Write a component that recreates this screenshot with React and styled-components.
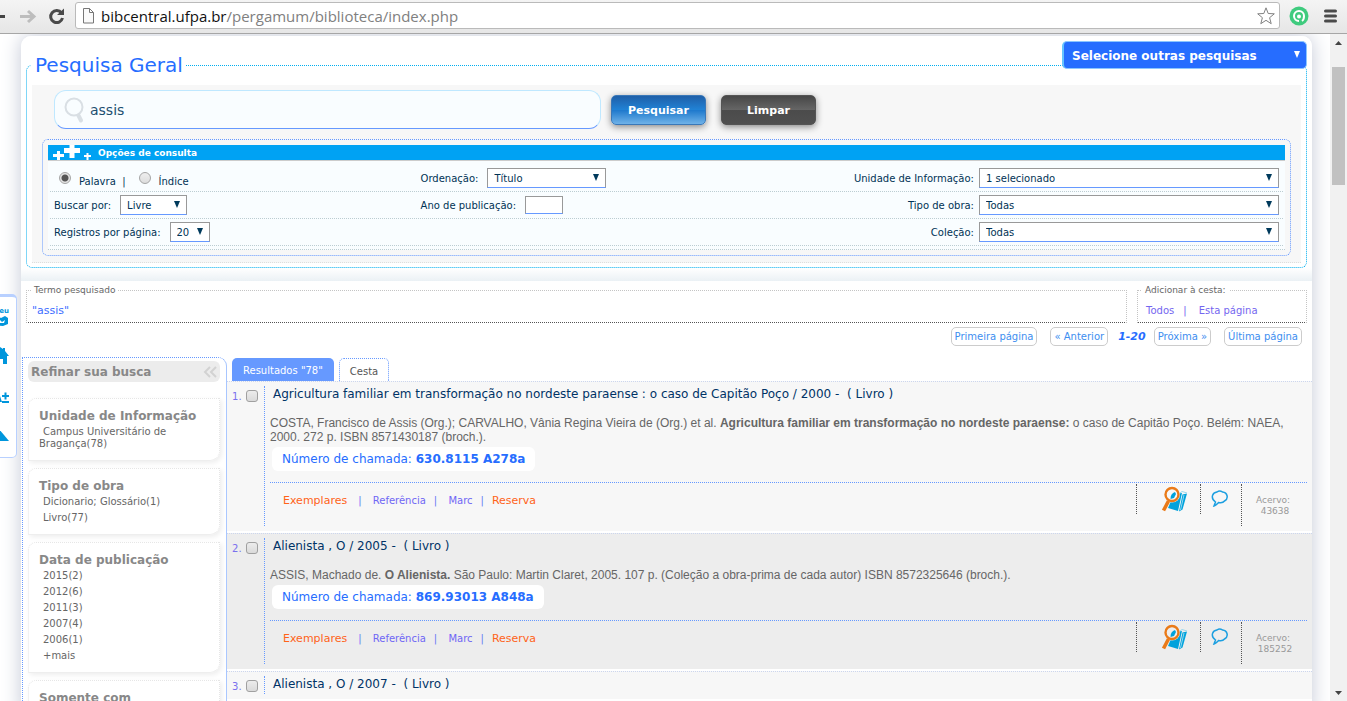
import React from 'react';
import styled, { createGlobalStyle, css } from 'styled-components';

const verdana = `Verdana, "DejaVu Sans", sans-serif`;
const arial = `Arial, "Liberation Sans", sans-serif`;

const Global = createGlobalStyle`
  *, *::before, *::after { box-sizing: border-box; }
  body { margin: 0; overflow: hidden; background: #fff; font-family: ${verdana}; font-size: 10px; color: #666; }
  a { text-decoration: none; color: inherit; }
  input, select, button { font-family: inherit; margin: 0; }
`;

const Window = styled.div`
  display: flex;
  flex-direction: column;
  height: 100vh;
  overflow: hidden;
`;

const Chrome = styled.header`
  flex: none;
  display: flex;
  align-items: center;
  height: 34px;
  padding: 0 9px 2px 0;
  background: linear-gradient(#f4f4f4, #e6e6e6);
  border-bottom: 1px solid #a6a6a6;
`;

const NavIcons = styled.div`
  flex: none;
  display: flex;
  width: 75px;
`;

const AddressBar = styled.div`
  flex: 1;
  display: flex;
  align-items: center;
  height: 27px;
  padding: 0 4px 0 6px;
  background: #fff;
  border: 1px solid #bababa;
  border-radius: 3px;
`;

const Address = styled.span`
  flex: 1;
  margin-left: 6px;
  font: 15px/24px "Segoe UI", "Open Sans", sans-serif;
  color: #808080;
  b { font-weight: 400; color: #111; }
`;

const ChromeRight = styled.div`
  flex: none;
  display: flex;
  align-items: center;
  gap: 14px;
  padding-left: 9px;
`;

const Viewport = styled.div`
  position: relative;
  flex: 1;
  display: flex;
  min-height: 0;
  overflow: hidden;
`;

const Page = styled.main`
  flex: 1;
  min-width: 0;
  overflow: hidden;
  padding: 2px 18px 0 21px;
`;

const Sheet = styled.div`
  position: relative;
  min-height: 100%;
  background: #fff;
  border-radius: 10px 10px 0 0;
  box-shadow: 0 0 20px #c3c8d6;
`;

const ScrollTrack = styled.div`
  flex: none;
  display: flex;
  flex-direction: column;
  width: 17px;
  padding: 7px 2px 6px;
  background: #f1f1f1;
`;

const ScrollThumb = styled.div`
  height: 118px;
  margin: 22px 0 auto;
  background: #c1c1c1;
`;

const Arrow = styled.svg`
  display: block;
  align-self: center;
`;

const SelectBox = styled.span`
  position: relative;
  display: inline-block;
  width: ${p => p.$w}px;
  max-width: 100%;
  &::after {
    content: "";
    position: absolute;
    right: 7px;
    top: 6px;
    border: solid transparent;
    border-width: 7px 3px 0;
    border-top-color: #003a5c;
    pointer-events: none;
  }
`;

const PlainSelect = styled.select`
  appearance: none;
  display: block;
  width: 100%;
  height: 20px;
  padding: 0 6px;
  font-size: 10px;
  color: #003355;
  background: #fff;
  border: 1px solid #999;
  border-bottom-color: #6699ff;
  border-radius: 0;
`;

const OtherSearches = styled(SelectBox)`
  position: absolute;
  top: 5px;
  right: 5px;
  &::after { right: 7px; top: 10px; border-top-color: #fff; }
`;

const OtherSelect = styled.select`
  appearance: none;
  display: block;
  width: 100%;
  height: 28px;
  padding: 2px 8px 0;
  font-size: 12px;
  font-weight: 700;
  color: #fff;
  background: #266dff;
  border: 1px solid #8cc6ff;
  border-left: 2px solid #66c4ff;
  border-radius: 5px;
`;

const SearchSection = styled.section`
  padding: 16px 5px 13px;
  background: linear-gradient(#fff, #fff) top / 100% calc(100% - 13px) no-repeat,
    linear-gradient(#fff, #ebf1f5) bottom / 100% 13px no-repeat;
  border-radius: 10px 10px 0 0;
`;

const SearchSet = styled.fieldset`
  min-width: 0;
  margin: 0;
  padding: 7px 5px 4px;
  border: 1px dotted #00aeef;
  border-radius: 6px;
`;

const SearchLegend = styled.legend`
  margin-left: -1px;
  padding: 0 2px 0 4px;
  font-size: 20px;
  line-height: 26px;
  color: #266dff;
`;

const GreyPanel = styled.div`
  padding: 5px 10px 6px;
  background: #f7f7f7;
  border-bottom: 1px dotted #ddd;
`;

const SearchRow = styled.div`
  display: flex;
  align-items: center;
  margin: 0 12px 10px;
`;

const SearchField = styled.label`
  display: flex;
  align-items: center;
  width: 547px;
  height: 39px;
  margin-right: 10px;
  padding-left: 8px;
  background: #f9fdff;
  border: 1px solid #bfe8ff;
  border-bottom-color: #6699ff;
  border-radius: 12px;
  svg { flex: none; }
`;

const SearchInput = styled.input`
  flex: 1;
  min-width: 0;
  margin-left: 5px;
  padding: 0;
  font-size: 14px;
  color: #1d4f70;
  background: transparent;
  border: 0;
  outline: 0;
`;

const Button = styled.button`
  width: 95px;
  height: 30px;
  margin-right: 15px;
  padding: 2px 0 0;
  font-size: 11px;
  font-weight: 700;
  color: #fff;
  border: 1px solid ${p => (p.$primary ? '#3a78b8' : '#555')};
  border-radius: 5px;
  box-shadow: 0 2px 7px #888;
  background: ${p => (p.$primary
    ? 'linear-gradient(#1f5fa8, #2183d6 50%, #1d78cc 50%, #6fb2e8)'
    : 'linear-gradient(#474747, #666 50%, #4b4b4b 50%, #505050)')};
`;

const Options = styled.div`
  padding: 5px;
  border: 1px dotted #6699ff;
  border-radius: 6px;
`;

const OptionsHead = styled.h2`
  display: flex;
  align-items: center;
  gap: 7px;
  height: 16px;
  margin: 0;
  padding-left: 5px;
  font-size: 9px;
  font-weight: 700;
  color: #fff;
  background: #00a2f3;
  border-bottom: 1px solid #ccc;
`;

const OptionsBody = styled.div`
  padding: 4px 2px 3px;
  background: #f9fdff;
  border-bottom: 1px dotted #bccdd2;
`;

const OptionRow = styled.div`
  display: grid;
  grid-template-columns: 11fr 8fr 18fr;
  height: 27px;
  border-bottom: 1px dotted #bccdd2;
`;

const Cell = styled.div`
  display: flex;
  align-items: center;
  gap: ${p => p.$gap || 9}px;
  justify-content: ${p => (p.$end ? 'flex-end' : 'flex-start')};
  padding: 0 4px;
  color: #003355;
`;

const YearInput = styled.input`
  width: 38px;
  height: 18px;
  padding: 0 4px;
  font-size: 10px;
  background: #fff;
  border: 1px solid #999;
  border-bottom-color: #6699ff;
`;

const Radio = styled.input`
  appearance: none;
  width: 12px;
  height: 12px;
  margin-left: 5px;
  border: 1px solid #a5a5a5;
  border-radius: 50%;
  background: linear-gradient(#eee, #ddd);
  &:checked { background: radial-gradient(circle, #555 0 3px, #e4e4e4 4px); }
`;

const RadioLabel = styled.label`
  padding-top: 6px;
`;

const TermRow = styled.div`
  display: flex;
  gap: 10px;
  padding: 4px 5px 0;
`;

const InfoSet = styled.fieldset`
  flex: ${p => (p.$w ? `0 0 ${p.$w}px` : '1')};
  min-width: 0;
  height: 38px;
  margin: 0;
  padding: 8px 5px 0;
  border: 1px dotted #c4c4c4;
  border-bottom-color: #555;
`;

const InfoLegend = styled.legend`
  margin-left: -1px;
  padding: 0 3px;
  font-size: 9px;
  line-height: 11px;
  color: #666;
`;

const Term = styled.div`
  font-size: 11px;
  line-height: 14px;
  color: #3d6eff;
`;

const BasketLinks = styled.div`
  display: flex;
  gap: 9px;
  padding-left: 3px;
  line-height: 14px;
  color: #7466f0;
`;

const Pager = styled.nav`
  display: flex;
  justify-content: flex-end;
  align-items: center;
  gap: 13px;
  margin: 4px 10px 11px;
  color: #3d8ef0;
`;

const PageLink = styled.a`
  padding: 0 3px;
  line-height: 17px;
  border: 1px solid #ccc;
  border-radius: 5px;
`;

const PageRange = styled.b`
  margin: 0 -5px 0 -3px;
  font-size: 11px;
  font-style: italic;
  color: #266dff;
`;

const Columns = styled.div`
  display: flex;
  align-items: flex-start;
  padding-left: 1px;
`;

const Sidebar = styled.aside`
  flex: none;
  display: flex;
  flex-direction: column;
  gap: 7px;
  width: 205px;
  padding: 3px 6px 0 5px;
  border: 1px dotted #6699ff;
  border-right: 1px solid #a8c6ff;
  border-bottom: 0;
  border-radius: 0 9px 0 0;
`;

const SideHead = styled.h2`
  display: flex;
  align-items: center;
  justify-content: space-between;
  height: 21px;
  margin: 0 0 9px;
  padding: 0 3px;
  font-size: 12px;
  color: #888;
  background: #ececec;
  border-radius: 6px;
`;

const Facet = styled.section`
  padding: 9px 10px 8px;
  border: 1px dotted #e6e6e6;
  border-bottom: 1px solid #eee;
  border-radius: 8px 0 10px 0;
  box-shadow: 2px 2px 5px #eee;
  h3 { margin: 0; font-size: 12px; line-height: 16px; color: #888; white-space: nowrap; }
  ul { margin: 0; padding: 0; list-style: none; }
  li { padding-left: 4px; line-height: 16px; }
  p { margin: 2px 0; line-height: 12px; text-indent: 4px; }
`;

const Results = styled.section`
  flex: 1;
  min-width: 0;
  padding-top: 1px;
`;

const Tabs = styled.div`
  display: flex;
  align-items: flex-end;
  gap: 5px;
  padding-left: 5px;
`;

const Tab = styled.button`
  height: 23px;
  padding: 2px 10px 0;
  font-size: 10px;
  border: 1px dotted #6699ff;
  border-bottom: 0;
  border-radius: 5px 5px 0 0;
  color: #555;
  background: #fff;
  ${p => p.$active && css`padding: 2px 11px 0; border: 0; color: #fff; background: #6699ff;`}
`;

const Record = styled.article`
  display: flex;
  margin-bottom: 2px;
  padding: 4px 5px 5px;
  background: ${p => (p.$alt ? '#ededed' : '#f7f7f7')};
  border-top: 1px dotted #ccd6ee;
`;

const RecordIndex = styled.label`
  flex: none;
  display: flex;
  align-items: flex-start;
  gap: 4px;
  width: 33px;
  padding-top: 4px;
  line-height: 14px;
  color: #7a70ee;
  border-right: 1px dotted #6699ff;
`;

const Check = styled.input`
  appearance: none;
  width: 12px;
  height: 12px;
  border: 1px solid #a0a0a0;
  border-radius: 3px;
  background: linear-gradient(#ececec, #dadada);
`;

const RecordMain = styled.div`
  flex: 1;
  min-width: 0;
  padding-left: 5px;
`;

const RecordTitle = styled.a`
  display: block;
  padding-left: 3px;
  font-size: 12px;
  line-height: 16px;
  color: #003366;
  white-space: pre-wrap;
`;

const Citation = styled.p`
  margin: 14px 0 3px;
  font: 12px/14px ${arial};
  color: #666;
`;

const CallNumber = styled.a`
  display: inline-block;
  margin-left: 2px;
  padding: 0 10px;
  font-size: 12px;
  line-height: 24px;
  color: #266dff;
  background: #fff;
  border-radius: 6px;
`;

const RecordFoot = styled.div`
  display: flex;
  align-items: flex-start;
  height: 44px;
  margin-top: 11px;
  padding-top: 1px;
  border-top: 1px dotted #6699ff;
`;

const Actions = styled.div`
  flex: 1;
  display: flex;
  align-items: center;
  gap: 8px;
  height: 32px;
  padding-left: 13px;
  color: #6f66f5;
`;

const MainAction = styled.a`
  padding-right: 3px;
  font-size: 11px;
  color: #ff6319;
`;

const Bar = styled.span`
  color: #6678f5;
`;

const IconSlot = styled.a`
  display: flex;
  align-items: center;
  justify-content: flex-end;
  width: ${p => p.$w}px;
  height: 30px;
  padding-right: 12px;
  border-left: 1px dotted #555;
`;

const Holding = styled.div`
  width: 66px;
  height: 42px;
  padding: 11px 0 0 14px;
  font-size: 9px;
  line-height: 11px;
  color: #999;
  border-left: 1px dotted #555;
  span { display: block; width: 38px; text-align: center; }
`;

const SideDock = styled.nav`
  position: absolute;
  top: 260px;
  left: -20px;
  display: flex;
  flex-direction: column;
  align-items: flex-end;
  width: 37px;
  height: 164px;
  padding: 10px 7px 0 0;
  color: #0096dc;
  background: #fff;
  border: 1px solid #b8d0ff;
  border-top-width: 3px;
  border-radius: 5px;
  svg { flex: none; }
`;

const DockText = styled.a`
  font-size: 7px;
  font-weight: 700;
  line-height: 9px;
`;

const Select = ({ w, label, value }) => (
  <SelectBox $w={w}>
    <PlainSelect aria-label={label}><option>{value}</option></PlainSelect>
  </SelectBox>
);

const BookIcon = ({ ground }) => (
  <svg width="27" height="27" viewBox="0 0 27 27">
    <path d="M13 8l8-1-4 18-10-3z" fill="#00a2dc" />
    <path d="M21.500 8.500l4.500-1-4.500 16-3.500 2z" fill="#00a2dc" />
    <path d="M16 6.500l3 .5 2-1.500 5 1.500" fill="none" stroke="#9bd8ee" />
    <path d="M23 9l-3.500 15" stroke="#8fd6f0" />
    <circle cx="11" cy="8.500" r="8" fill={ground} />
    <path d="M9.500 13c0-4 1.500-6 4.500-7l1 2-2 4z" fill="#00a2dc" />
    <circle cx="11" cy="8.500" r="6.500" fill="none" stroke="#ea7a18" strokeWidth="2.400" />
    <path d="M7.500 15L2.500 24.500" stroke="#ea7a18" strokeWidth="3.600" />
  </svg>
);

const BubbleIcon = () => (
  <svg width="18" height="18" viewBox="0 0 18 18" fill="none" stroke="#1c9fe0" strokeWidth="1.500">
    <path d="M3 16l1.500-4C-1 8 1.500 2.500 6 2c2-1.500 4-1 5.500 0 5 .5 6.500 6.500 2 9-1.500 2-4 2-6 1.500C6 14 5 15.500 3 16z" />
  </svg>
);

const records = [
  {
    title: 'Agricultura familiar em transformação no nordeste paraense : o caso de Capitão Poço / 2000 -  ( Livro )',
    cite: <>COSTA, Francisco de Assis (Org.); CARVALHO, Vânia Regina Vieira de (Org.) et al. <b>Agricultura familiar em transformação no nordeste paraense:</b> o caso de Capitão Poço. Belém: NAEA, 2000. 272 p. ISBN 8571430187 (broch.).</>,
    call: '630.8115 A278a',
    id: '43638',
  },
  {
    title: 'Alienista , O / 2005 -  ( Livro )',
    cite: <>ASSIS, Machado de. <b>O Alienista.</b> São Paulo: Martin Claret, 2005. 107 p. (Coleção a obra-prima de cada autor) ISBN 8572325646 (broch.).</>,
    call: '869.93013 A848a',
    id: '185252',
  },
  { title: 'Alienista , O / 2007 -  ( Livro )' },
];

const facets = [
  { name: 'Tipo de obra', items: ['Dicionario; Glossário(1)', 'Livro(77)'] },
  { name: 'Data de publicação', items: ['2015(2)', '2012(6)', '2011(3)', '2007(4)', '2006(1)', '+mais'] },
];

export default function App() {
  return (
    <Window>
      <Global />
      <Chrome>
        <NavIcons>
          <svg width="75" height="30" viewBox="0 0 75 30" fill="none">
            <path d="M0 15.500h5" stroke="#444" strokeWidth="3" />
            <path d="M20 15.500h13M28 10l6 5.500-6 5.500" stroke="#bdbdbd" strokeWidth="3" />
            <path d="M61.500 12a6 6 0 1 0 1 5" stroke="#4a4a4a" strokeWidth="3" />
            <path d="M64 7.500v6.500h-7z" fill="#4a4a4a" />
          </svg>
        </NavIcons>
        <AddressBar>
          <svg width="13" height="16" viewBox="0 0 13 16" fill="#fafafa" stroke="#777">
            <path d="M1.500.5h6l4 4v10.500h-10zM7.500.5v4h4" />
          </svg>
          <Address><b>bibcentral.ufpa.br</b>/pergamum/biblioteca/index.php</Address>
          <svg width="18" height="18" viewBox="0 0 18 18" fill="none" stroke="#808080" strokeLinejoin="round">
            <path d="M9 .8l2.200 5.700 6.100.3-4.700 3.900 1.600 6L9 13.300l-5.200 3.400 1.600-6L.7 6.800l6.100-.3z" />
          </svg>
        </AddressBar>
        <ChromeRight>
          <svg width="20" height="20" viewBox="0 0 20 20" fill="none">
            <circle cx="10" cy="10" r="9.500" fill="#3fcb7e" />
            <path d="M10 15a5 5 0 1 1 5-5c0 2.500-.5 4-2 5" stroke="#fff" strokeWidth="2" />
            <circle cx="10" cy="10.500" r="2" fill="#fff" />
          </svg>
          <svg width="15" height="14" viewBox="0 0 15 14" stroke="#4a4a4a" strokeWidth="3" strokeLinecap="round">
            <path d="M2.500 2h10M2.500 7h10M2.500 12h10" />
          </svg>
        </ChromeRight>
      </Chrome>

      <Viewport>
        <Page>
          <Sheet>
            <SearchSection>
              <SearchSet>
                <SearchLegend>Pesquisa Geral</SearchLegend>
                <GreyPanel>
                  <SearchRow>
                    <SearchField>
                      <svg width="22" height="28" viewBox="0 0 22 28" fill="none" stroke="#d9dfe4">
                        <circle cx="11" cy="11" r="8.500" strokeWidth="2" />
                        <path d="M15.500 19.500l2.500 5" strokeWidth="4" strokeLinecap="round" />
                      </svg>
                      <SearchInput aria-label="Pesquisa" defaultValue="assis" />
                    </SearchField>
                    <Button $primary>Pesquisar</Button>
                    <Button>Limpar</Button>
                  </SearchRow>
                  <Options>
                    <OptionsHead>
                      <svg width="38" height="15" viewBox="0 0 38 15" stroke="#fff">
                        <path d="M0 10.500h11M5.500 6v9" strokeWidth="3" />
                        <path d="M11 5.500h16M19 0v13" strokeWidth="5" />
                        <path d="M31 11h7M34.500 8v7" strokeWidth="2" />
                      </svg>
                      Opções de consulta
                    </OptionsHead>
                    <OptionsBody>
                      <OptionRow>
                        <Cell $gap={8}>
                          <Radio type="radio" name="modo" id="palavra" defaultChecked />
                          <RadioLabel htmlFor="palavra">Palavra&nbsp; |</RadioLabel>
                          <Radio type="radio" name="modo" id="indice" />
                          <RadioLabel htmlFor="indice">Índice</RadioLabel>
                        </Cell>
                        <Cell>Ordenação: <Select w={119} label="Ordenação" value="Título" /></Cell>
                        <Cell $end $gap={5}>Unidade de Informação: <Select w={300} label="Unidade de Informação" value="1 selecionado" /></Cell>
                      </OptionRow>
                      <OptionRow>
                        <Cell>Buscar por: <Select w={67} label="Buscar por" value="Livre" /></Cell>
                        <Cell>Ano de publicação: <YearInput aria-label="Ano de publicação" /></Cell>
                        <Cell $end $gap={5}>Tipo de obra: <Select w={300} label="Tipo de obra" value="Todas" /></Cell>
                      </OptionRow>
                      <OptionRow>
                        <Cell>Registros por página: <Select w={40} label="Registros por página" value="20" /></Cell>
                        <Cell />
                        <Cell $end $gap={5}>Coleção: <Select w={300} label="Coleção" value="Todas" /></Cell>
                      </OptionRow>
                    </OptionsBody>
                  </Options>
                </GreyPanel>
              </SearchSet>
            </SearchSection>
            <OtherSearches $w={245}>
              <OtherSelect aria-label="Outras pesquisas"><option>Selecione outras pesquisas</option></OtherSelect>
            </OtherSearches>

            <TermRow>
              <InfoSet>
                <InfoLegend>Termo pesquisado</InfoLegend>
                <Term>"assis"</Term>
              </InfoSet>
              <InfoSet $w={170}>
                <InfoLegend>Adicionar à cesta:</InfoLegend>
                <BasketLinks><a href="#todos">Todos</a><span>|</span><a href="#pagina">&nbsp;Esta página</a></BasketLinks>
              </InfoSet>
            </TermRow>

            <Pager>
              <PageLink href="#primeira">Primeira página</PageLink>
              <PageLink href="#anterior">« Anterior</PageLink>
              <PageRange>1-20</PageRange>
              <PageLink href="#proxima">Próxima »</PageLink>
              <PageLink href="#ultima">Última página</PageLink>
            </Pager>

            <Columns>
              <Sidebar>
                <SideHead>
                  Refinar sua busca
                  <svg width="14" height="12" viewBox="0 0 14 12" fill="none" stroke="#d2d2d2" strokeWidth="2">
                    <path d="M7 1L2 6l5 5M13 1L8 6l5 5" />
                  </svg>
                </SideHead>
                <Facet>
                  <h3>Unidade de Informação</h3>
                  <p><a href="#campus">Campus Universitário de Bragança(78)</a></p>
                </Facet>
                {facets.map(f => (
                  <Facet key={f.name}>
                    <h3>{f.name}</h3>
                    <ul>{f.items.map(i => <li key={i}><a href="#filtro">{i}</a></li>)}</ul>
                  </Facet>
                ))}
                <Facet><h3>Somente com</h3></Facet>
              </Sidebar>

              <Results>
                <Tabs>
                  <Tab $active>Resultados "78"</Tab>
                  <Tab>Cesta</Tab>
                </Tabs>
                {records.map((r, i) => (
                  <Record key={r.title} $alt={i % 2 === 1}>
                    <RecordIndex>{i + 1}. <Check type="checkbox" /></RecordIndex>
                    <RecordMain>
                      <RecordTitle href="#registro">{r.title}</RecordTitle>
                      {r.cite && (
                        <>
                          <Citation>{r.cite}</Citation>
                          <CallNumber href="#chamada">Número de chamada: <b>{r.call}</b></CallNumber>
                          <RecordFoot>
                            <Actions>
                              <MainAction href="#exemplares">Exemplares</MainAction>
                              <Bar>|</Bar>
                              <a href="#referencia">&nbsp;Referência</a>
                              <Bar>|</Bar>
                              <a href="#marc">&nbsp;Marc</a>
                              <Bar>|</Bar>
                              <MainAction href="#reserva">Reserva</MainAction>
                            </Actions>
                            <IconSlot $w={64} href="#acervo" aria-label="Acervo">
                              <BookIcon ground={i % 2 === 1 ? '#ededed' : '#f7f7f7'} />
                            </IconSlot>
                            <IconSlot $w={41} href="#comentar" aria-label="Comentar"><BubbleIcon /></IconSlot>
                            <Holding>Acervo:<span>{r.id}</span></Holding>
                          </RecordFoot>
                        </>
                      )}
                    </RecordMain>
                  </Record>
                ))}
              </Results>
            </Columns>
          </Sheet>
        </Page>

        <ScrollTrack>
          <Arrow width="7" height="4" viewBox="0 0 7 4"><path d="M0 4l3.500-4L7 4z" fill="#444" /></Arrow>
          <ScrollThumb />
          <Arrow width="7" height="4" viewBox="0 0 7 4"><path d="M0 0l3.500 4L7 0z" fill="#444" /></Arrow>
        </ScrollTrack>

        <SideDock>
          <DockText href="#meu">Meu</DockText>
          <svg width="29" height="130" viewBox="0 0 29 130" fill="#0096dc">
            <path d="M14 3l5-2 2 1 4-2 3 2v6l-5 2-9-1z" />
            <path d="M20 4l2 2 3-2-1 3h-4z" fill="#fff" />
            <path d="M20 31l3 2v-1h2v3l4 5h-2v8h-4v-5h-4v5h-5v-8h-3z" />
            <path d="M22 80h7M25.500 76.500v7M22 86h7" stroke="#0096dc" strokeWidth="2" />
            <path d="M15 86l4-9 3 9h-2l-1-2h-2l-1 2z" />
            <path d="M19 113l10 12H8z" />
          </svg>
        </SideDock>
      </Viewport>
    </Window>
  );
}
